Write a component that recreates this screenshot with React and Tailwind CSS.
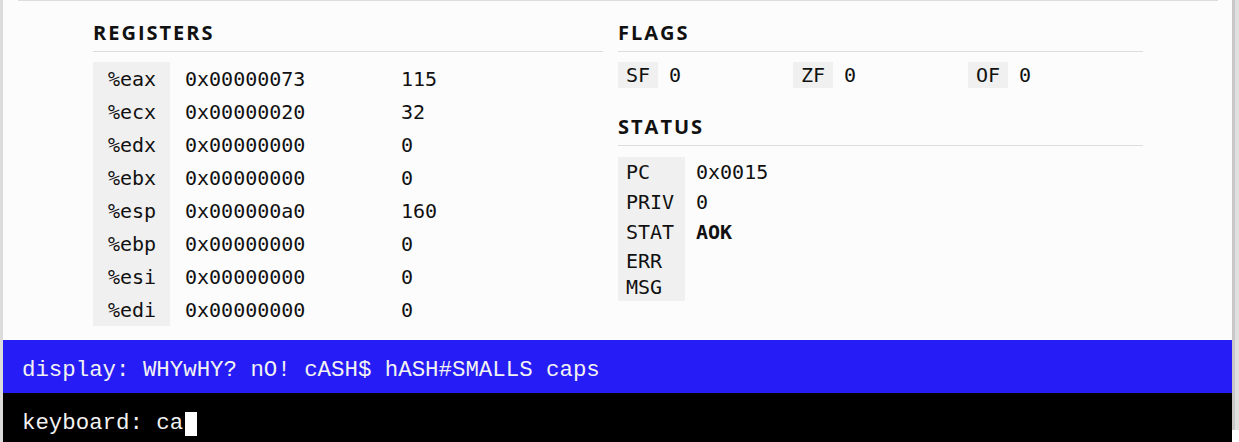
import React from 'react';

const registers = [
  ['%eax', '0x00000073', '115'],
  ['%ecx', '0x00000020', '32'],
  ['%edx', '0x00000000', '0'],
  ['%ebx', '0x00000000', '0'],
  ['%esp', '0x000000a0', '160'],
  ['%ebp', '0x00000000', '0'],
  ['%esi', '0x00000000', '0'],
  ['%edi', '0x00000000', '0'],
];

const flags = [
  ['SF', '0'],
  ['ZF', '0'],
  ['OF', '0'],
];

const mono = "font-['DejaVu_Sans_Mono',monospace]";

const Heading = ({ children, className = '' }) => (
  <div className={`h-[35px] border-b border-[#dddddd] ${className}`}>
    <h2 className="text-[20px] font-bold leading-[32px] tracking-[0.1em] text-[#111] font-['Open_Sans',sans-serif]">
      {children}
    </h2>
  </div>
);

const App = () => {
  return (
    <div className="flex h-[442px] w-full overflow-hidden bg-white">
      {/* main panel */}
      <div className="flex h-full flex-1 flex-col border-l-[3px] border-[#dcdcdc] bg-[#fcfcfc]">
        <div className="ml-[15px] mr-[14px] h-px bg-[#dddddd]" />

        <div className={`h-[339px] pl-[90px] pt-[16px] text-[20px] text-[#111] ${mono}`}>
          <div className="grid grid-cols-[510px_525px] gap-x-[15px]">
            {/* registers */}
            <div>
              <Heading>REGISTERS</Heading>
              <div className="mt-[10px] grid grid-cols-[77px_216px_1fr] leading-[34px]">
                {registers.map(([name, hex, dec]) => (
                  <React.Fragment key={name}>
                    <div className="h-[33px] bg-[#f0f0f0] pl-[15px]">{name}</div>
                    <div className="h-[33px] pl-[15px]">{hex}</div>
                    <div className="h-[33px] pl-[15px]">{dec}</div>
                  </React.Fragment>
                ))}
              </div>
            </div>

            {/* flags + status */}
            <div>
              <Heading>FLAGS</Heading>
              <div className="mt-[10px] grid grid-cols-3">
                {flags.map(([name, val]) => (
                  <div key={name} className="flex h-[25px] items-center leading-[25px]">
                    <span className="bg-[#f0f0f0] px-[8px] pt-[1px]">{name}</span>
                    <span className="ml-[11px] pt-[1px]">{val}</span>
                  </div>
                ))}
              </div>

              <Heading className="mt-[24px]">STATUS</Heading>
              <div className="mt-[11px] grid grid-cols-[67px_1fr] leading-[30px]">
                <div className="bg-[#f0f0f0] pl-[8px]">PC</div>
                <div className="pl-[11px]">0x0015</div>
                <div className="bg-[#f0f0f0] pl-[8px]">PRIV</div>
                <div className="pl-[11px]">0</div>
                <div className="bg-[#f0f0f0] pl-[8px]">STAT</div>
                <div className="pl-[11px] font-bold">AOK</div>
                <div className="bg-[#f0f0f0] py-[1px] pl-[8px] pr-[4px] leading-[26px]">ERR MSG</div>
                <div className="pl-[11px]" />
              </div>
            </div>
          </div>
        </div>

        {/* display */}
        <div className="flex h-[53px] items-center bg-[#261cf6] pl-[19px] pt-[9px] text-[22.4px] text-[#f2f2f2] font-['Liberation_Mono',monospace]">
          display: WHYwHY? nO! cASH$ hASH#SMALLS caps
        </div>

        {/* keyboard */}
        <div className="flex flex-1 items-center bg-black pl-[19px] pt-[12px] text-[22.4px] text-[#f2f2f2] font-['Liberation_Mono',monospace]">
          <span>keyboard: ca</span>
          <span className="ml-[2px] inline-block h-[24px] w-[12px] bg-white" />
        </div>
      </div>

      {/* scrollbar strip */}
      <div className="flex h-[430px] w-[7px]">
        <div className="w-[3px] bg-[#c8c8c8]" />
        <div className="w-[4px] bg-[#e0e0e0]" />
      </div>
    </div>
  );
};

export default App;
